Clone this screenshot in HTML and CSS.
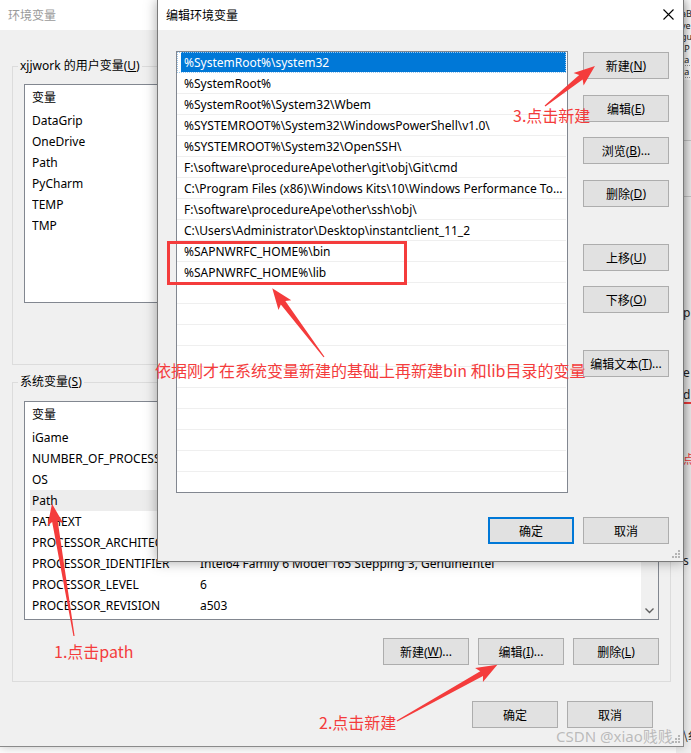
FILE: index.html
```html
<!DOCTYPE html>
<html lang="zh-CN">
<head>
<meta charset="utf-8">
<title>环境变量</title>
<link rel="stylesheet" href="styles.css">
</head>
<body>
<div class="desk">

  <div class="win-far">
    <div class="far-top">
      <div>aB</div><div>ve</div><div>gu</div><div>\P</div><div class="dotted">ta</div><div class="dotted">ta</div>
    </div>
    <div class="far-mid">
      <div class="far-line l1"></div>
      <div class="far-line l2"></div>
      <div class="far-txt t1">p</div>
      <div class="far-txt t2">e</div>
      <div class="far-txt t3 red-under">d</div>
      <div class="far-txt t4 red">点</div>
      <div class="far-txt t5">s</div>
      <div class="far-txt t6">\纟</div>
    </div>
  </div>

  <div class="win back">
    <div class="titlebar inactive">环境变量</div>
    <div class="back-body">
      <fieldset class="group">
        <legend>xjjwork 的用户变量(<u>U</u>)</legend>
        <div class="listview">
          <div class="lv-main">
            <div class="lv-head"><span class="c1">变量</span></div>
            <div class="lv-row"><span class="c1">DataGrip</span></div>
            <div class="lv-row"><span class="c1">OneDrive</span></div>
            <div class="lv-row"><span class="c1">Path</span></div>
            <div class="lv-row"><span class="c1">PyCharm</span></div>
            <div class="lv-row"><span class="c1">TEMP</span></div>
            <div class="lv-row"><span class="c1">TMP</span></div>
          </div>
        </div>
        <div class="btn-row">
          <div class="btn blank"></div>
          <div class="btn blank"></div>
          <div class="btn blank"></div>
        </div>
      </fieldset>

      <fieldset class="group sys">
        <legend>系统变量(<u>S</u>)</legend>
        <div class="listview with-scroll">
          <div class="lv-main">
            <div class="lv-head"><span class="c1">变量</span></div>
            <div class="lv-row"><span class="c1">iGame</span></div>
            <div class="lv-row"><span class="c1">NUMBER_OF_PROCESSORS</span></div>
            <div class="lv-row"><span class="c1">OS</span></div>
            <div class="lv-row hl"><span class="c1">Path</span></div>
            <div class="lv-row"><span class="c1">PATHEXT</span></div>
            <div class="lv-row"><span class="c1">PROCESSOR_ARCHITECTURE</span></div>
            <div class="lv-row"><span class="c1">PROCESSOR_IDENTIFIER</span><span class="c2">Intel64 Family 6 Model 165 Stepping 3, GenuineIntel</span></div>
            <div class="lv-row"><span class="c1">PROCESSOR_LEVEL</span><span class="c2">6</span></div>
            <div class="lv-row"><span class="c1">PROCESSOR_REVISION</span><span class="c2">a503</span></div>
          </div>
          <div class="vscroll">
            <svg class="chev" width="9" height="6" viewBox="0 0 9 6"><path d="M0.5 0.5 L4.5 4.5 L8.5 0.5" fill="none" stroke="#606060" stroke-width="1.4"/></svg>
          </div>
        </div>
        <div class="btn-row">
          <div class="btn">新建(<u>W</u>)...</div>
          <div class="btn">编辑(<u>I</u>)...</div>
          <div class="btn">删除(<u>L</u>)</div>
        </div>
      </fieldset>

      <div class="foot-row">
        <div class="btn">确定</div>
        <div class="btn">取消</div>
      </div>
    </div>
    <svg class="grip back-grip" width="8" height="8" viewBox="0 0 8 8"><g fill="#b5b5b5"><rect x="6" y="0" width="2" height="2"/><rect x="3" y="3" width="2" height="2"/><rect x="6" y="3" width="2" height="2"/><rect x="0" y="6" width="2" height="2"/><rect x="3" y="6" width="2" height="2"/><rect x="6" y="6" width="2" height="2"/></g></svg>
  </div>

  <div class="win dlg">
    <div class="titlebar">
      <span>编辑环境变量</span>
      <svg class="close" width="11" height="11" viewBox="0 0 11 11"><path d="M0.5 0.5 L10.5 10.5 M10.5 0.5 L0.5 10.5" stroke="#000" stroke-width="1.1" fill="none"/></svg>
    </div>
    <div class="dlg-body">
      <div class="dlg-main">
        <div class="dlg-list">
          <div class="dl-row sel">%SystemRoot%\system32</div>
          <div class="dl-row">%SystemRoot%</div>
          <div class="dl-row">%SystemRoot%\System32\Wbem</div>
          <div class="dl-row">%SYSTEMROOT%\System32\WindowsPowerShell\v1.0\</div>
          <div class="dl-row">%SYSTEMROOT%\System32\OpenSSH\</div>
          <div class="dl-row">F:\software\procedureApe\other\git\obj\Git\cmd</div>
          <div class="dl-row">C:\Program Files (x86)\Windows Kits\10\Windows Performance Toolkit\</div>
          <div class="dl-row">F:\software\procedureApe\other\ssh\obj\</div>
          <div class="dl-row">C:\Users\Administrator\Desktop\instantclient_11_2</div>
          <div class="dl-row">%SAPNWRFC_HOME%\bin</div>
          <div class="dl-row">%SAPNWRFC_HOME%\lib</div>
          <div class="dl-row"></div>
          <div class="dl-row"></div>
          <div class="dl-row"></div>
          <div class="dl-row"></div>
          <div class="dl-row"></div>
          <div class="dl-row"></div>
          <div class="dl-row"></div>
          <div class="dl-row"></div>
          <div class="dl-row"></div>
          <div class="dl-row"></div>
        </div>
        <div class="dlg-btns">
          <div class="btn">新建(<u>N</u>)</div>
          <div class="btn m16">编辑(<u>E</u>)</div>
          <div class="btn m15">浏览(<u>B</u>)...</div>
          <div class="btn m16">删除(<u>D</u>)</div>
          <div class="btn m37">上移(<u>U</u>)</div>
          <div class="btn m15">下移(<u>O</u>)</div>
          <div class="btn m37">编辑文本(<u>T</u>)...</div>
        </div>
      </div>
      <div class="foot-row dlg-foot">
        <div class="btn default">确定</div>
        <div class="btn">取消</div>
      </div>
    </div>
    <svg class="grip dlg-grip" width="8" height="8" viewBox="0 0 8 8"><g fill="#b5b5b5"><rect x="6" y="0" width="2" height="2"/><rect x="3" y="3" width="2" height="2"/><rect x="6" y="3" width="2" height="2"/><rect x="0" y="6" width="2" height="2"/><rect x="3" y="6" width="2" height="2"/><rect x="6" y="6" width="2" height="2"/></g></svg>
  </div>

  <div class="red-box"></div>

  <svg class="arrows" width="691" height="753" viewBox="0 0 691 753">
    <g fill="#f43c3c">
      <polygon transform="translate(545 106) rotate(-38.66)" points="0,-0.6 46,-2.8 43,-8 64,0 43,8 46,2.8 0,0.6"/>
      <polygon transform="translate(324 357) rotate(-127)" points="0,-0.6 68,-2.8 65,-8 86,0 65,8 68,2.8 0,0.6"/>
      <polygon transform="translate(74 636) rotate(-99.46)" points="0,-0.6 116,-2.8 113,-8 134,0 113,8 116,2.8 0,0.6"/>
      <polygon transform="translate(397 721) rotate(-29.25)" points="0,-0.6 97,-2.8 94,-8 115,0 94,8 97,2.8 0,0.6"/>
    </g>
  </svg>

  <div class="note n3">3.点击新建</div>
  <div class="note nbig">依据刚才在系统变量新建的基础上再新建bin 和lib目录的变量</div>
  <div class="note n1">1.点击path</div>
  <div class="note n2">2.点击新建</div>
  <div class="watermark">CSDN @xiao贱贱</div>
</div>
</body>
</html>
```

FILE: styles.css
```css
* { box-sizing: border-box; }
html, body { margin: 0; padding: 0; }
body {
  width: 691px;
  height: 753px;
  overflow: hidden;
  background: #fff;
  font-family: "Noto Sans", "Noto Sans CJK SC", sans-serif;
  font-size: 12px;
  color: #000;
}
u { text-decoration: underline; text-underline-offset: 1px; }

.desk { position: relative; width: 691px; height: 753px; overflow: hidden; }

/* far window peeking on the right */
.win-far {
  position: absolute;
  left: 676px;
  top: 0;
  width: 40px;
  height: 753px;
  background: #f0f0f0;
  font-size: 9px;
  color: #222;
}
.far-top { height: 80px; background: #fff; padding: 8px 0 0 5px; line-height: 11.6px; }
.far-top > div { height: 11.6px; overflow: hidden; }
.far-top .dotted { border-bottom: 1px dotted #999; }
.far-mid { position: relative; height: 673px; }
.far-line { height: 1px; background: #c8c8c8; margin-top: 60px; }
.far-line.l2 { margin-top: 55px; }
.far-txt { position: absolute; left: 7px; font-size: 12px; line-height: 14px; }
.far-txt.t1 { top: 166px; }
.far-txt.t2 { top: 226px; }
.far-txt.t3 { top: 248px; }
.far-txt.red-under { border-bottom: 2px solid #f43c3c; padding-right: 10px; }
.far-txt.t4 { top: 312px; color: #f43c3c; font-family: "Noto Sans CJK SC", sans-serif; }
.far-txt.t5 { top: 414px; }
.far-txt.t6 { top: 588px; font-family: "Noto Sans CJK SC", sans-serif; }

/* generic window */
.win { position: absolute; background: #f0f0f0; }
.titlebar {
  height: 30px;
  background: #fff;
  line-height: 30px;
  padding-left: 8px;
  font-family: "Noto Sans CJK SC", sans-serif;
  font-size: 12px;
}
.titlebar.inactive { color: #9a9a9a; }

/* background window */
.back {
  left: 0;
  top: 0;
  width: 684px;
  height: 747px;
  border-right: 1px solid #8a8a8a;
  border-bottom: 1px solid #8a8a8a;
  box-shadow: 0 0 10px rgba(0,0,0,.25);
}
.back-body { padding: 0 12px 0 12px; }
.group {
  margin: 27px 0 0;
  padding: 9px 11px 16px;
  border: 1px solid #dcdcdc;
  min-width: 0;
}
.group.sys { margin-top: 8px; padding-top: 10px; }
.group legend {
  padding: 0 2px;
  margin-left: -6px;
  line-height: 18px;
  font-family: "Noto Sans", "Noto Sans CJK SC", sans-serif;
}
.listview {
  height: 219px;
  background: #fff;
  border: 1px solid #828790;
  overflow: hidden;
  display: grid;
  grid-template-columns: 1fr;
}
.listview.with-scroll { grid-template-columns: 1fr 17px; }
.lv-main { min-width: 0; overflow: hidden; }
.lv-head { height: 25px; line-height: 25px; display: flex; padding-left: 7px; white-space: nowrap; }
.lv-row {
  height: 21px;
  line-height: 21px;
  display: flex;
  margin-left: 5px;
  padding-left: 2px;
  white-space: nowrap;
}
.lv-row.hl { background: #ededed; }
.c1 { width: 168px; flex: none; overflow: hidden; }
.c2 { flex: none; }
.vscroll {
  background: #f0f0f0;
  display: flex;
  align-items: flex-end;
  justify-content: center;
  padding-bottom: 5px;
}

.btn-row { display: flex; justify-content: flex-end; gap: 9px; margin-top: 18px; }
.foot-row { display: flex; justify-content: flex-end; gap: 9px; margin: 19px 18px 0 0; }

.btn {
  width: 86px;
  height: 27px;
  flex: none;
  background: #e1e1e1;
  border: 1px solid #adadad;
  display: flex;
  align-items: center;
  justify-content: center;
  white-space: nowrap;
  font-family: "Noto Sans", "Noto Sans CJK SC", sans-serif;
  font-size: 12px;
}
.btn.default { border: 2px solid #0078d7; }

.grip { position: absolute; }
.back-grip { right: 3px; bottom: 3px; }

/* edit dialog */
.dlg {
  left: 157px;
  top: 0;
  width: 527px;
  height: 562px;
  border: 1px solid #7a7a7a;
  border-top: none;
  box-shadow: 0 0 12px rgba(0,0,0,.35);
}
.dlg .titlebar {
  display: flex;
  justify-content: space-between;
  align-items: center;
  padding: 0 9px 0 8px;
  color: #000;
}
.close { display: block; margin-top: -1px; }
.dlg-body { padding: 21px 14px 17px 18px; }
.dlg-main { display: flex; gap: 15px; }
.dlg-list {
  width: 392px;
  height: 442px;
  flex: none;
  background: #fff;
  border: 1px solid #828790;
  overflow: hidden;
}
.dl-row {
  height: 21px;
  line-height: 22px;
  border-bottom: 1px solid #efefef;
  padding: 0 3px 0 7px;
  margin-right: 1px;
  white-space: nowrap;
  overflow: hidden;
  text-overflow: ellipsis;
}
.dl-row.sel {
  background: #0078d7;
  color: #fff;
  box-shadow: inset 4px 0 0 #fff;
  outline: 1px dotted #9cc8ee;
  outline-offset: -1px;
  border-bottom-color: #fff;
}
.dlg-btns { display: flex; flex-direction: column; padding-top: 1px; }
.dlg-btns .m15 { margin-top: 15px; }
.dlg-btns .m16 { margin-top: 16px; }
.dlg-btns .m37 { margin-top: 37px; }
.dlg-foot { margin: 24px 0 0 0; }
.dlg-grip { right: 3px; bottom: 3px; }

/* annotations */
.red-box {
  position: absolute;
  left: 167px;
  top: 241px;
  width: 240px;
  height: 44px;
  border: 3px solid #f43c3c;
}
.arrows { position: absolute; left: 0; top: 0; pointer-events: none; }
.note {
  position: absolute;
  color: #f43c3c;
  font-family: "Noto Sans CJK SC", sans-serif;
  font-size: 16px;
  line-height: 22px;
  white-space: nowrap;
}
.n3 { left: 513px; top: 104px; }
.nbig { left: 155px; top: 359px; }
.n1 { left: 54px; top: 640px; }
.n2 { left: 319px; top: 711px; }
.watermark {
  position: absolute;
  left: 556px;
  top: 726px;
  font-family: "Noto Sans", "Noto Sans CJK SC", sans-serif;
  font-size: 15px;
  line-height: 20px;
  color: rgba(150,150,150,.6);
  white-space: nowrap;
}
```
